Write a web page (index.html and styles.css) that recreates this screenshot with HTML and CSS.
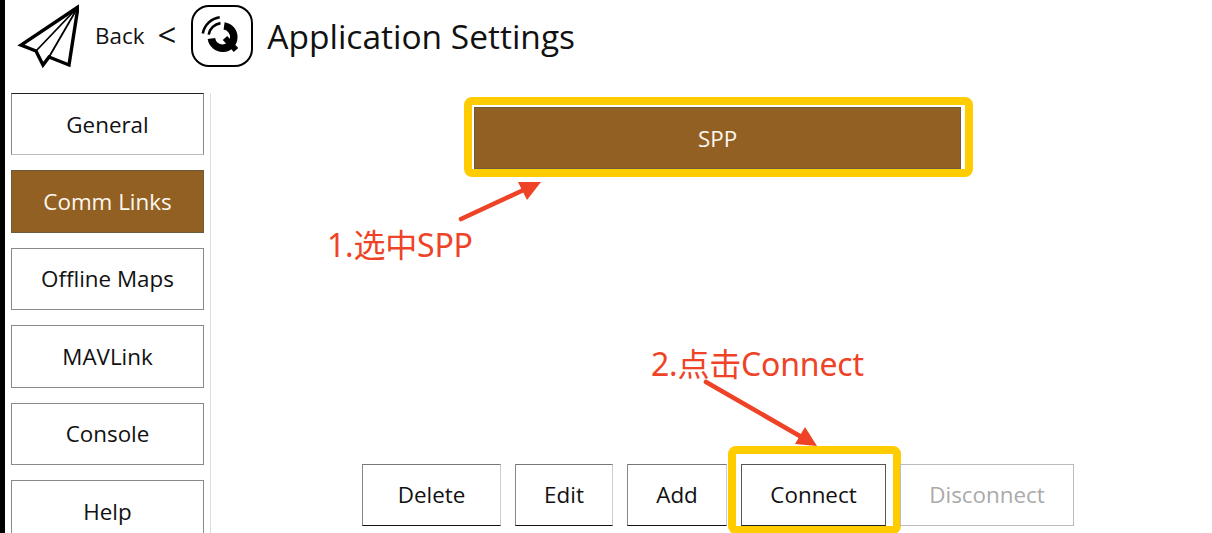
FILE: index.html
```html
<!DOCTYPE html>
<html lang="zh">
<head>
<meta charset="utf-8">
<title>Application Settings</title>
<link rel="stylesheet" href="styles.css">
</head>
<body>
<div class="app">
  <header class="topbar">
    <svg class="plane" width="64" height="72" viewBox="15 0 64 72" aria-hidden="true">
      <path class="plane-line" d="M78 7 L21 45 L36 51 L43 65 L49 57 L69 65 Z"/>
      <path class="plane-fold" d="M78 7 L36 51 M78 7 L49 57 M36 51 L43 65"/>
    </svg>
    <span class="back">Back</span>
    <span class="chevron">&lt;</span>
    <div class="logo">
      <svg width="62" height="62" viewBox="191 5 62 62" aria-hidden="true">
        <rect class="logo-box" x="192" y="6" width="60" height="60" rx="17"/>
        <path class="q-ring" d="M224.1 25.9 A11.25 11.25 0 1 1 211.4 38.6"/>
        <path class="q-tail" d="M225 38 L236 50"/>
        <path class="q-arc" d="M208.7 34.6 A14 14 0 0 1 220.5 23.1"/>
        <path class="q-arc" d="M202.8 33.5 A20 20 0 0 1 219.7 17.2"/>
      </svg>
    </div>
    <h1 class="title">Application Settings</h1>
  </header>
  <main class="body">
    <nav class="sidebar">
      <a class="btn side-btn">General</a>
      <a class="btn side-btn active">Comm Links</a>
      <a class="btn side-btn">Offline Maps</a>
      <a class="btn side-btn">MAVLink</a>
      <a class="btn side-btn">Console</a>
      <a class="btn side-btn">Help</a>
    </nav>
    <section class="content">
      <div class="link-list">
        <a class="btn link-item active">SPP<span class="mark mark-spp"></span></a>
      </div>
      <div class="actions">
        <a class="btn act delete">Delete</a>
        <a class="btn act edit">Edit</a>
        <a class="btn act add">Add</a>
        <a class="btn act connect">Connect<span class="mark mark-connect"></span></a>
        <a class="btn act disconnect">Disconnect</a>
      </div>
    </section>
  </main>
</div>
<svg class="arrows" width="1212" height="533" viewBox="0 0 1212 533" aria-hidden="true">
  <path class="arrow-line" d="M461 219 L530 187"/>
  <path class="arrow-head" d="M541 182 L518 182 L527 200 Z"/>
  <path class="arrow-line" d="M706 382 L805 439"/>
  <path class="arrow-head" d="M817 446 L805 427 L795 444 Z"/>
</svg>
<p class="note note-one">1.选中SPP</p>
<p class="note note-two">2.点击Connect</p>
</body>
</html>
```
FILE: styles.css
```css
* { box-sizing: border-box; }
html, body {
  margin: 0;
  height: 533px;
  overflow: hidden;
  background: #fff;
}
body {
  position: relative;
  font-family: "Open Sans", "Noto Sans CJK SC", sans-serif;
  color: #111;
}
.app {
  height: 533px;
  border-left: 5px solid #000;
  display: flex;
  flex-direction: column;
}
.topbar {
  height: 93px;
  flex: none;
  display: flex;
  align-items: flex-start;
  padding-left: 10px;
}
.plane { flex: none; }
.plane-line, .plane-fold {
  fill: none;
  stroke: #000;
  stroke-linejoin: miter;
}
.plane-line { stroke-width: 3.4; }
.plane-fold { stroke-width: 1.8; }
.back {
  margin: 21px 0 0 16px;
  font-size: 22.4px;
  line-height: 30px;
}
.chevron {
  margin: 15px 0 0 13px;
  font-size: 33px;
  line-height: 40px;
}
.logo {
  margin: 5px 0 0 15px;
  width: 62px;
  height: 62px;
}
.logo svg { display: block; }
.logo-box { fill: #fff; stroke: #000; stroke-width: 2; }
.q-ring { fill: none; stroke: #000; stroke-width: 7.5; }
.q-tail { fill: none; stroke: #000; stroke-width: 6; }
.q-arc { fill: none; stroke: #000; stroke-width: 2.6; }
.title {
  margin: 14px 0 0 14px;
  font-size: 33.5px;
  line-height: 45px;
  font-weight: 400;
  white-space: nowrap;
}
.body {
  flex: 1;
  min-height: 0;
  display: flex;
}
.sidebar {
  width: 206px;
  flex: none;
  padding: 0 6px;
  border-right: 1px solid #ddd;
  display: flex;
  flex-direction: column;
  gap: 15px;
  overflow: hidden;
}
.btn {
  display: flex;
  align-items: center;
  justify-content: center;
  position: relative;
  background: #fff;
  border: 1px solid #8a8a8a;
  font-size: 22.4px;
  color: #111;
  white-space: nowrap;
}
.side-btn {
  flex: none;
  width: 193px;
  height: 62.4px;
}
.side-btn:first-child { border-top-color: #222; border-bottom-color: #bbb; }
.btn.active {
  background: #936023;
  border-color: #6e5a3c;
  color: #fbf7f0;
}
.content {
  flex: 1;
  min-width: 0;
  padding: 14px 0 7px 13px;
  display: flex;
  flex-direction: column;
  justify-content: space-between;
  align-items: center;
}
.link-list { margin-right: 1px; }
.link-item {
  width: 487px;
  height: 62px;
  border-top-color: #222;
  border-bottom-color: #444;
  border-left-color: #888;
  border-right-color: #6e5a3c;
}
.actions {
  display: flex;
  gap: 14px;
}
.act {
  height: 62px;
  padding-bottom: 1px;
  border-top-color: #777;
  border-bottom-color: #111;
  border-left-color: #888;
  border-right-color: #ccc;
}
.delete { width: 139px; }
.edit { width: 98px; }
.add { width: 100px; }
.connect { width: 145px; border-color: #555; border-bottom-color: #222; }
.disconnect {
  width: 174px;
  color: #aaa;
  border-color: #bbb;
}
.mark {
  position: absolute;
  border: 8px solid #ffcc00;
  border-radius: 8px;
  pointer-events: none;
}
.mark-spp { left: -11px; right: -13px; top: -11px; bottom: -9px; }
.mark-connect { left: -14px; right: -16px; top: -19px; bottom: -9px; }
.arrows {
  position: absolute;
  left: 0;
  top: 0;
  pointer-events: none;
}
.arrow-line { fill: none; stroke: #ee4327; stroke-width: 4.6; stroke-linecap: round; }
.arrow-head { fill: #ee4327; }
.note {
  position: absolute;
  margin: 0;
  font-family: "Noto Sans", "Noto Sans CJK SC", sans-serif;
  font-size: 32px;
  line-height: 40px;
  letter-spacing: -0.2px;
  color: #ee4327;
  white-space: nowrap;
}
.note-one { left: 327px; top: 225px; }
.note-two { left: 651px; top: 344px; }
```
